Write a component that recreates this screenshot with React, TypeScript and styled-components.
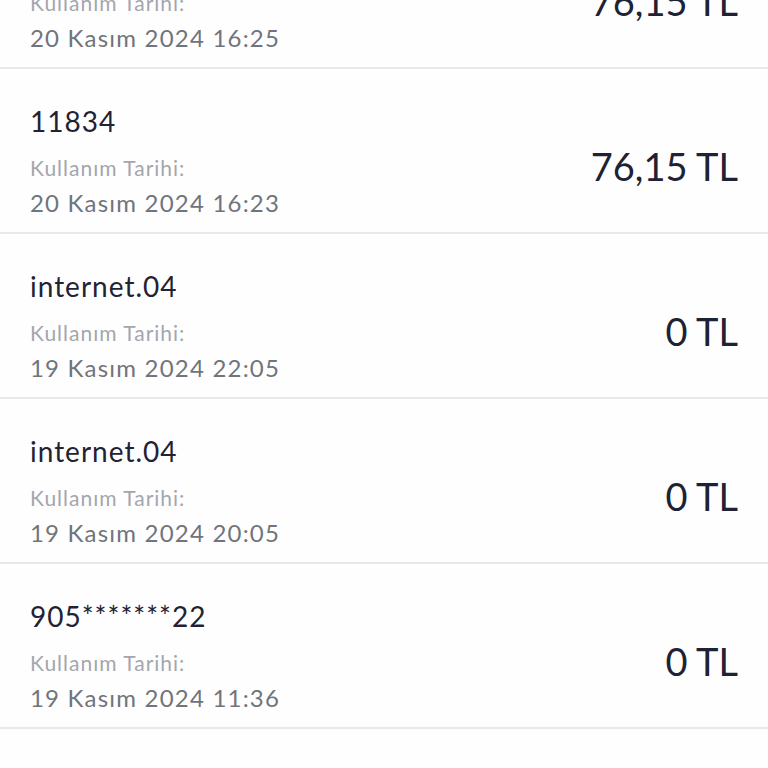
import styled, { createGlobalStyle } from "styled-components";

const GlobalStyle = createGlobalStyle`
  html, body {
    margin: 0;
    padding: 0;
    background: #ffffff;
  }
  body {
    font-family: Lato, "Noto Sans", sans-serif;
    overflow: hidden;
  }
`

const Screen = styled.div`
  width: 768px;
  height: 768px;
  overflow: hidden;
  background: #fefefe;
`

// list is scrolled: first row sits partly above the top edge
const List = styled.div`
  display: flex;
  flex-direction: column;
  margin-top: -96px;
`

const Row = styled.div`
  display: flex;
  justify-content: space-between;
  align-items: flex-start;
  height: 129px;
  padding: 34px 30px 0 30px;
  border-bottom: 2px solid #e7e8ea;
`

const Info = styled.div`
  display: flex;
  flex-direction: column;
`

const Title = styled.div`
  font-size: 28px;
  line-height: 36px;
  letter-spacing: 1px;
  color: #1f2334;
`

const Label = styled.div`
  margin-top: 15px;
  font-size: 21px;
  line-height: 28px;
  letter-spacing: 1px;
  color: #a3a6ad;
`

const DateText = styled.div`
  margin-top: 5px;
  font-size: 24px;
  line-height: 32px;
  letter-spacing: 1.2px;
  color: #70747c;
`

const Amount = styled.div`
  margin-top: 40px;
  font-size: 38px;
  line-height: 46px;
  color: #1e2234;
`

type Usage = { title: string; date: string; amount: string }

const usages: Usage[] = [
  { title: "11834", date: "20 Kasım 2024 16:25", amount: "76,15 TL" },
  { title: "11834", date: "20 Kasım 2024 16:23", amount: "76,15 TL" },
  { title: "internet.04", date: "19 Kasım 2024 22:05", amount: "0 TL" },
  { title: "internet.04", date: "19 Kasım 2024 20:05", amount: "0 TL" },
  { title: "905*******22", date: "19 Kasım 2024 11:36", amount: "0 TL" },
  { title: "internet.04", date: "19 Kasım 2024 09:12", amount: "0 TL" },
]

export default function App() {
  return (
    <>
      <GlobalStyle />
      <Screen>
        <List>
          {usages.map((u, i) => (
            <Row key={i}>
              <Info>
                <Title>{u.title}</Title>
                <Label>Kullanım Tarihi:</Label>
                <DateText>{u.date}</DateText>
              </Info>
              <Amount>{u.amount}</Amount>
            </Row>
          ))}
        </List>
      </Screen>
    </>
  )
}
